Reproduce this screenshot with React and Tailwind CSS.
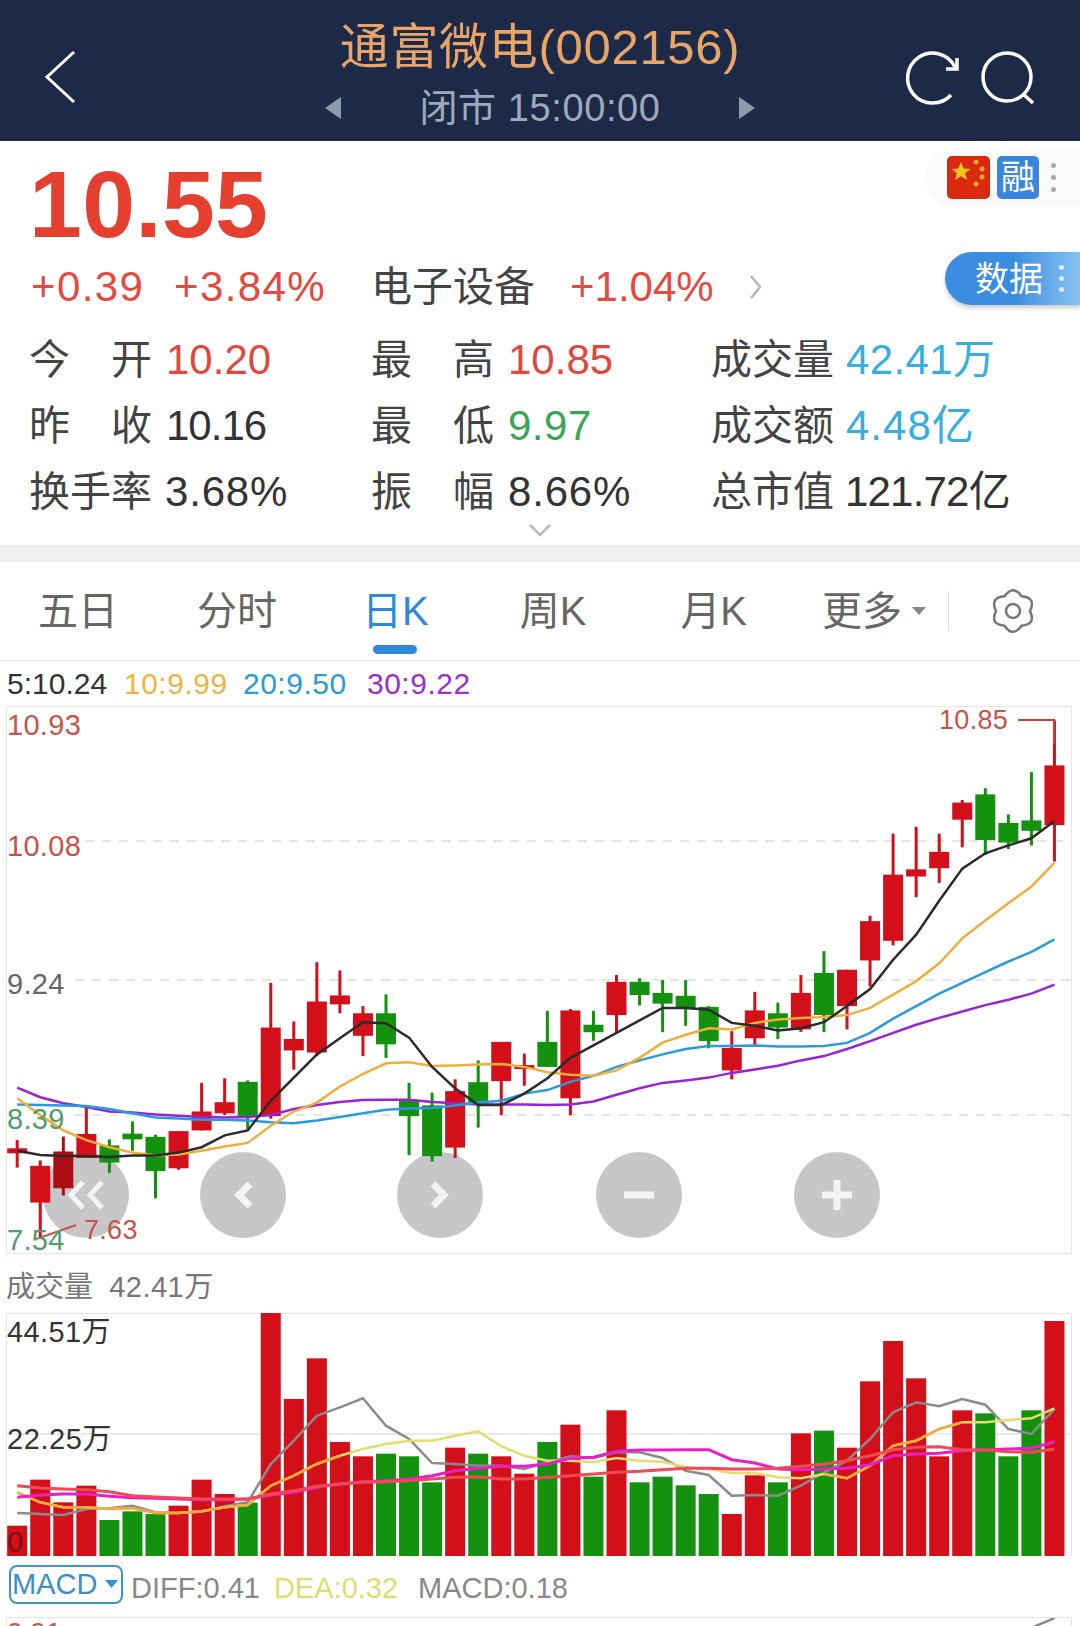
import React from 'react';

// chart traces, measured from the reference. one entry per trading day
// [wickTop, wickBottom, bodyTop, bodyBottom, up]
const candles = [
  [1235, 1312, 1258, 1272, 1], [1292, 1510, 1307, 1410, 1], [1225, 1390, 1267, 1370, 2], [1140, 1285, 1218, 1285, 1],
  [1233, 1327, 1250, 1298, 0], [1183, 1265, 1217, 1233, 0], [1220, 1398, 1226, 1322, 0], [1210, 1318, 1210, 1314, 1],
  [1075, 1208, 1155, 1208, 1], [1062, 1165, 1129, 1160, 1], [1068, 1205, 1072, 1170, 0], [795, 1175, 920, 1168, 1],
  [903, 1038, 952, 984, 1], [737, 1000, 847, 990, 1], [760, 880, 830, 855, 1], [860, 1000, 880, 943, 1],
  [827, 1005, 880, 967, 0], [1075, 1277, 1125, 1168, 0], [1102, 1295, 1138, 1280, 0], [1065, 1285, 1098, 1256, 1],
  [1012, 1200, 1073, 1135, 0], [960, 1165, 960, 1070, 1], [993, 1083, 1025, 1033, 1], [873, 1030, 960, 1030, 0],
  [868, 1165, 872, 1118, 1], [873, 957, 912, 933, 0], [773, 935, 792, 885, 1], [782, 858, 792, 829, 0],
  [787, 933, 823, 853, 0], [787, 915, 831, 868, 0], [860, 978, 862, 958, 0], [930, 1065, 977, 1040, 1],
  [820, 968, 872, 950, 1], [850, 952, 880, 920, 0], [773, 932, 823, 925, 1], [706, 933, 767, 885, 0],
  [758, 925, 758, 860, 1], [607, 805, 622, 732, 1], [377, 690, 492, 677, 1], [358, 555, 477, 497, 1],
  [377, 515, 428, 474, 1], [283, 415, 290, 338, 1], [250, 437, 267, 395, 0], [323, 420, 347, 402, 0],
  [205, 410, 340, 369, 0], [60, 455, 186, 353, 1],
];

const ma5 = [1265, 1277, 1280, 1280, 1282, 1278, 1278, 1270, 1255, 1222, 1208, 1125, 1060, 995, 950, 905, 908, 948, 1030, 1090, 1137, 1137, 1105, 1062, 1005, 970, 935, 900, 865, 865, 870, 907, 915, 928, 922, 905, 860, 812, 730, 660, 565, 475, 432, 410, 390, 342];
const ma10 = [1118, 1165, 1208, 1235, 1255, 1270, 1278, 1275, 1265, 1253, 1243, 1195, 1155, 1130, 1085, 1050, 1020, 1017, 1028, 1026, 1023, 1022, 1030, 1045, 1052, 1055, 1040, 1005, 962, 940, 922, 925, 907, 897, 893, 890, 885, 865, 828, 790, 740, 670, 620, 572, 525, 458];
const ma20 = [1135, 1137, 1138, 1140, 1148, 1160, 1172, 1175, 1178, 1178, 1180, 1185, 1188, 1180, 1170, 1160, 1150, 1147, 1145, 1138, 1130, 1125, 1105, 1095, 1072, 1055, 1030, 1012, 995, 980, 972, 972, 970, 973, 973, 972, 963, 935, 895, 860, 825, 795, 765, 735, 708, 673];
const ma30 = [1088, 1115, 1132, 1142, 1155, 1158, 1163, 1167, 1170, 1172, 1170, 1165, 1148, 1137, 1128, 1123, 1122, 1122, 1128, 1132, 1135, 1135, 1135, 1137, 1135, 1127, 1108, 1090, 1075, 1068, 1060, 1047, 1037, 1027, 1012, 1000, 980, 958, 935, 912, 893, 875, 857, 842, 825, 800];

const volTops = [800, 662, 730, 680, 783, 757, 765, 740, 662, 705, 731, 160, 420, 298, 549, 592, 584, 592, 670, 566, 584, 592, 644, 549, 497, 653, 454, 670, 653, 679, 705, 765, 649, 670, 523, 515, 566, 367, 246, 358, 592, 454, 463, 592, 454, 186];
const volGray = [762, 765, 768, 750, 748, 740, 760, 762, 758, 742, 730, 615, 545, 470, 445, 418, 500, 540, 612, 615, 620, 620, 630, 610, 592, 597, 580, 580, 597, 635, 648, 710, 708, 710, 680, 640, 605, 540, 460, 430, 442, 420, 437, 510, 525, 450];
const volYellow = [700, 730, 745, 745, 750, 748, 762, 762, 757, 745, 738, 680, 650, 615, 590, 570, 555, 545, 545, 530, 517, 562, 590, 605, 605, 610, 597, 605, 608, 625, 630, 642, 642, 655, 658, 645, 658, 620, 560, 545, 510, 490, 490, 483, 478, 448];
const volMagenta = [715, 708, 705, 705, 712, 716, 718, 720, 722, 722, 720, 708, 700, 685, 675, 668, 665, 660, 650, 635, 628, 622, 622, 615, 598, 595, 577, 573, 573, 572, 572, 602, 612, 630, 632, 630, 628, 617, 590, 585, 583, 575, 572, 570, 568, 548];
const volRed = [680, 687, 690, 692, 698, 710, 714, 717, 720, 720, 720, 705, 695, 682, 675, 670, 668, 665, 660, 655, 653, 660, 660, 655, 650, 645, 640, 637, 632, 628, 628, 630, 630, 628, 622, 615, 605, 590, 572, 565, 563, 572, 573, 578, 580, 570];

const dayX = (i) => 17.2 + 23.05 * i;
const priceY = (v) => 700 + v / 2.8;
const volY = (v) => 1260 + v / 3;
const toPoints = (arr, mapY, from = 0) => arr.map((v, i) => `${dayX(i + from).toFixed(1)},${mapY(v).toFixed(1)}`).join(' ');

const candleColor = { 0: '#13910f', 1: '#d30f1a', 2: '#b00c14' };

function gearPath(cx, cy) {
  let d = '';
  for (let k = 0; k < 6; k++) {
    const a = (-90 + k * 60) * Math.PI / 180;
    const b = (-60 + k * 60) * Math.PI / 180;
    const c = (-120 + k * 60) * Math.PI / 180;
    const start = `${(cx + 17 * Math.cos(c)).toFixed(1)} ${(cy + 17 * Math.sin(c)).toFixed(1)}`;
    if (k === 0) d += `M${start} `;
    d += `Q${(cx + 27 * Math.cos(a)).toFixed(1)} ${(cy + 27 * Math.sin(a)).toFixed(1)} ${(cx + 17 * Math.cos(b)).toFixed(1)} ${(cy + 17 * Math.sin(b)).toFixed(1)} `;
  }
  return d + 'Z';
}

function Label({ text }) {
  return <span className="w-[123px] shrink-0 flex justify-between text-[41px] leading-[48px] text-[#444]">{text.map((c) => <span key={c}>{c}</span>)}</span>;
}

function Stat({ label, value, color }) {
  return (
    <div className="flex items-center">
      <Label text={label} />
      <span className={`text-[42px] leading-[48px] ${color}`}>{value}</span>
    </div>
  );
}

function RoundButton({ className, children }) {
  return (
    <div className={`absolute top-[445px] w-[86px] h-[86px] rounded-full bg-[#c7c7c9] ${className}`}>
      <svg width="86" height="86" viewBox="0 0 86 86" fill="none" stroke="#f4f4f4">{children}</svg>
    </div>
  );
}

export default function App() {
  return (
    <div className="w-[1080px] h-[1626px] overflow-hidden bg-white flex flex-col [font-family:'Liberation_Sans','Noto_Sans_CJK_SC',sans-serif]">
      {/* header */}
      <div className="h-[141px] shrink-0 bg-[#1c2a48] flex relative">
        <svg className="w-[180px] h-[141px]" viewBox="0 0 180 141" fill="none" stroke="#fff" strokeWidth="3">
          <path d="M74 52 47 77 74 102" />
        </svg>
        <div className="flex-1 flex flex-col items-center">
          <div className="mt-[21px] text-[49px] leading-[52px] text-[#e9a468] tracking-[0.7px]">通富微电(002156)</div>
          <div className="mt-[13px] w-[431px] flex items-center justify-between">
            <svg width="16" height="24" viewBox="0 0 16 24"><path d="M16 1V23L0 12Z" fill="#8e99ac" /></svg>
            <span className="text-[38px] leading-[44px] tracking-[0.6px] text-[#a0a9b9]">闭市 15:00:00</span>
            <svg width="16" height="24" viewBox="0 0 16 24"><path d="M0 1V23L16 12Z" fill="#8e99ac" /></svg>
          </div>
        </div>
        <svg className="w-[180px] h-[141px]" viewBox="900 0 180 141" fill="none" stroke="#fff" strokeWidth="3.5">
          <path d="M951 95A25 25 0 1 1 955 67" />
          <path d="M946 69H957V58" />
          <circle cx="1007" cy="77" r="24" />
          <path d="M1023 94 1033 103" />
        </svg>
      </div>

      {/* quote */}
      <div className="h-[404px] shrink-0 relative flex flex-col">
        <div className="h-[126px] pl-[29px] flex items-center text-[95px] leading-[100px] tracking-[0.3px] font-bold text-[#e5402f]">10.55</div>
        <div className="h-[40px] pl-[31px] flex items-center text-[42px] leading-[44px] text-[#e5493f]">
          <span className="w-[143px] tracking-[1.4px]">+0.39</span>
          <span className="w-[197px] tracking-[1.4px]">+3.84%</span>
          <span className="w-[199px] text-[41px] text-[#444]">电子设备</span>
          <span className="w-[178px]">+1.04%</span>
          <svg width="16" height="28" viewBox="0 0 16 28" fill="none" stroke="#b5b5b5" strokeWidth="2.5"><path d="M3 3 12 14 3 25" /></svg>
        </div>
        <div className="mt-[20px] pl-[29px] grid grid-cols-[342px_340px_1fr] auto-rows-[66px] items-center">
          <Stat label={['今', '开']} value="10.20" color="ml-[14px] text-[#e0483e]" />
          <Stat label={['最', '高']} value="10.85" color="ml-[14px] text-[#e0483e]" />
          <Stat label={['成', '交', '量']} value="42.41万" color="ml-[12px] tracking-[0.4px] text-[#35aee2]" />
          <Stat label={['昨', '收']} value="10.16" color="ml-[14px] tracking-[-1px] text-[#333]" />
          <Stat label={['最', '低']} value="9.97" color="ml-[14px] tracking-[0.5px] text-[#3aa655]" />
          <Stat label={['成', '交', '额']} value="4.48亿" color="ml-[12px] tracking-[1px] text-[#35aee2]" />
          <Stat label={['换', '手', '率']} value="3.68%" color="ml-[13px] tracking-[0.8px] text-[#333]" />
          <Stat label={['振', '幅']} value="8.66%" color="ml-[14px] tracking-[0.8px] text-[#333]" />
          <Stat label={['总', '市', '值']} value="121.72亿" color="ml-[11px] tracking-[-0.8px] text-[#333]" />
        </div>
        <svg className="self-center mt-[-2px]" width="24" height="14" viewBox="0 0 24 14" fill="none" stroke="#bbb" strokeWidth="2.5"><path d="M2 2 12 12 22 2" /></svg>

        {/* badges on the right */}
        <div className="absolute right-0 top-[9px] w-[155px] h-[55px] rounded-l-full bg-[#fafafa] flex items-center pl-[22px]">
          <svg width="43" height="43" viewBox="0 0 43 43">
            <rect width="43" height="43" rx="5" fill="#d9290f" />
            <path d="M14 6l2.6 6.4 6.9.5-5.3 4.4 1.8 6.7-6-3.7-6 3.7 1.8-6.7-5.300-4.400 6.900-.5z" fill="#f7c51d" />
            <circle cx="29" cy="6" r="2.5" fill="#e9a825" />
            <circle cx="35" cy="13" r="2.5" fill="#e9a825" />
            <circle cx="35" cy="21" r="2.5" fill="#e9a825" />
            <circle cx="29" cy="28" r="2.5" fill="#e9a825" />
          </svg>
          <div className="ml-[7px] w-[42px] h-[43px] rounded-[5px] bg-[#3a86dc] flex items-center justify-center text-[34px] leading-[43px] text-white">融</div>
          <div className="ml-[12px] flex flex-col gap-[7px]">
            <span className="w-[5px] h-[5px] rounded-full bg-[#aaa]" />
            <span className="w-[5px] h-[5px] rounded-full bg-[#aaa]" />
            <span className="w-[5px] h-[5px] rounded-full bg-[#aaa]" />
          </div>
        </div>
        <div className="absolute right-0 top-[111px] w-[135px] h-[53px] rounded-l-full bg-gradient-to-r from-[#3a8de0] via-[#3a8de0] to-[#86c2f2] shadow-[0_3px_4px_rgba(0,0,0,0.2)] flex items-center pl-[30px]">
          <span className="text-[34px] leading-[40px] text-white">数据</span>
          <div className="ml-[16px] flex flex-col gap-[6px]">
            <span className="w-[5px] h-[5px] rounded-full bg-[#dfeefb]" />
            <span className="w-[5px] h-[5px] rounded-full bg-[#dfeefb]" />
            <span className="w-[5px] h-[5px] rounded-full bg-[#dfeefb]" />
          </div>
        </div>
      </div>

      <div className="h-[17px] shrink-0 bg-[#f0f0f0]" />

      {/* period tabs */}
      <div className="h-[99px] shrink-0 relative flex items-center border-b border-[#e5e5e5] text-[40px] leading-[46px] text-[#666]">
        <span className="ml-[38px]">五日</span>
        <span className="ml-[79px]">分时</span>
        <span className="ml-[85px] text-[#2f89d9]">日K</span>
        <span className="ml-[91px]">周K</span>
        <span className="ml-[94px]">月K</span>
        <span className="ml-[75px]">更多</span>
        <svg className="ml-[10px]" width="14" height="8" viewBox="0 0 14 8"><path d="M0 0H14L7 8Z" fill="#888" /></svg>
        <span className="ml-[22px] w-[1px] h-[40px] bg-[#ddd]" />
        <svg className="ml-[41px]" width="46" height="46" viewBox="992 588 46 46" fill="none" stroke="#777" strokeWidth="2.5">
          <path d={gearPath(1015, 611)} />
          <circle cx="1015" cy="611" r="7" />
        </svg>
        <span className="absolute left-[373px] top-[83px] w-[44px] h-[9px] rounded-full bg-[#2f89d9]" />
      </div>

      {/* MA legend */}
      <div className="h-[45px] shrink-0 pl-[7px] flex items-center text-[30px] leading-[36px]">
        <span className="w-[117px] text-[#333]">5:10.24</span>
        <span className="w-[119px] tracking-[0.5px] text-[#eeb440]">10:9.99</span>
        <span className="w-[124px] tracking-[0.5px] text-[#2a9ad8]">20:9.50</span>
        <span className="tracking-[0.5px] text-[#9a30c8]">30:9.22</span>
      </div>

      {/* price panel */}
      <div className="h-[548px] shrink-0 ml-[6px] w-[1066px] relative border border-[#e5e5e5] text-[29px] leading-[36px] tracking-[0.3px]">
        <RoundButton className="left-[36px]"><path d="M40 30 28 43 40 56M59 30 47 43 59 56" strokeWidth="5" /></RoundButton>
        <RoundButton className="left-[193px]"><path d="M50 32 39 43 50 54" strokeWidth="7" /></RoundButton>
        <RoundButton className="left-[390px]"><path d="M36 32 47 43 36 54" strokeWidth="7" /></RoundButton>
        <RoundButton className="left-[589px]"><path d="M28 43H58" strokeWidth="7" /></RoundButton>
        <RoundButton className="left-[787px]"><path d="M28 43H58M43 28V58" strokeWidth="7" /></RoundButton>

        <svg className="absolute -left-px -top-px" width="1066" height="548" viewBox="6 707 1066 548" fill="none">
          <path d="M85 842H1070" stroke="#ddd" strokeWidth="1.5" strokeDasharray="9 8" />
          <path d="M75 981H1070" stroke="#ddd" strokeWidth="1.5" strokeDasharray="9 8" />
          <path d="M75 1116H1070" stroke="#ddd" strokeWidth="1.5" strokeDasharray="9 8" />
          {candles.map(([wt, wb, bt, bb, up], i) => (
            <g key={i} fill={candleColor[up]}>
              <rect x={dayX(i) - 1.5} y={priceY(wt)} width="3" height={priceY(wb) - priceY(wt)} />
              <rect x={dayX(i) - 10} y={priceY(bt)} width="20" height={Math.max(priceY(bb) - priceY(bt), 4)} />
            </g>
          ))}
          <polyline points={toPoints(ma30, priceY)} stroke="#9a22d6" strokeWidth="2.5" />
          <polyline points={toPoints(ma20, priceY)} stroke="#2a9ae0" strokeWidth="2.5" />
          <polyline points={toPoints(ma10, priceY)} stroke="#f0ae3a" strokeWidth="2.5" />
          <polyline points={toPoints(ma5, priceY)} stroke="#2b2b2b" strokeWidth="2.5" />
          <path d="M42 1238 76 1226" stroke="#c9524a" strokeWidth="2" />
          <path d="M1018 721H1054V745" stroke="#c9423a" strokeWidth="2" />
        </svg>

        <span className="absolute left-[0px] top-[0px] text-[#c9524a]">10.93</span>
        <span className="absolute left-[0px] top-[121px] text-[#c9524a]">10.08</span>
        <span className="absolute left-[0px] top-[259px] text-[#666]">9.24</span>
        <span className="absolute left-[0px] top-[394px] text-[#4f9e6d]">8.39</span>
        <span className="absolute left-[0px] top-[515px] text-[#4f9e6d]">7.54</span>
        <span className="absolute left-[77px] top-[505px] text-[27px] text-[#c9524a]">7.63</span>
        <span className="absolute left-[932px] top-[-5px] text-[27px] text-[#c9524a]">10.85</span>
      </div>

      {/* volume */}
      <div className="h-[59px] shrink-0 pl-[6px] pt-[15px] text-[29px] leading-[36px] text-[#777]">成交量&nbsp;&nbsp;<span className="tracking-[0.5px]">42.41万</span></div>
      <div className="h-[243px] shrink-0 ml-[6px] w-[1066px] relative border-x border-t border-[#e5e5e5] text-[29px] leading-[36px] text-[#333]">
        <svg className="absolute -left-px -top-px" width="1066" height="243" viewBox="6 1314 1066 243" fill="none">
          <path d="M6 1435H1070" stroke="#e5e5e5" strokeWidth="1.5" />
          {volTops.map((top, i) => (
            <rect key={i} x={dayX(i) - 10} y={volY(top)} width="20" height={1557 - volY(top)} fill={candles[i][4] === 0 ? '#13910f' : '#d30f1a'} />
          ))}
          <polyline points={toPoints(volGray, volY)} stroke="#8b8b8b" strokeWidth="2.5" />
          <polyline points={toPoints(volYellow, volY)} stroke="#e3de6c" strokeWidth="2.5" />
          <polyline points={toPoints(volYellow.slice(0, 15), volY)} stroke="#f7a93a" strokeWidth="2.5" />
          <polyline points={toPoints(volYellow.slice(35, 42), volY, 35)} stroke="#f7a93a" strokeWidth="2.5" />
          <polyline points={toPoints(volMagenta, volY)} stroke="#ea1fc8" strokeWidth="3" />
          <polyline points={toPoints(volRed, volY)} stroke="#ef4a55" strokeWidth="3" />
        </svg>
        <span className="absolute left-[0px] top-[0px] tracking-[0.4px]">44.51万</span>
        <span className="absolute left-[0px] top-[107px] tracking-[0.6px]">22.25万</span>
        <span className="absolute left-[0px] top-[210px] text-[#7d1016]">0</span>
      </div>

      {/* MACD row */}
      <div className="h-[61px] shrink-0 flex items-center pl-[9px] text-[29px] leading-[36px]">
        <div className="w-[114px] h-[39px] -mt-[5px] rounded-[8px] border-2 border-[#3f93c8] flex items-center pl-[1px] text-[29px] text-[#3c8fc8]">
          MACD
          <svg className="ml-[8px] shrink-0" width="13" height="8" viewBox="0 0 13 8"><path d="M0 0H13L6.500 8Z" fill="#2c96dc" /></svg>
        </div>
        <span className="ml-[8px] w-[143px] mt-[3px] text-[#888]">DIFF:0.41</span>
        <span className="w-[144px] mt-[3px] text-[#dfdc70]">DEA:0.32</span>
        <span className="mt-[3px] text-[#888]">MACD:0.18</span>
      </div>

      {/* bottom of the MACD panel, cut by the screen */}
      <div className="flex-1 ml-[6px] w-[1066px] relative overflow-hidden border-x border-t border-[#e5e5e5] text-[28px] leading-[36px] text-[#c9524a]">
        <span className="absolute left-[0px] top-[-3px]">0.91</span>
        <svg className="absolute right-[16px] top-[-1px]" width="22" height="10" viewBox="0 0 22 10" fill="none" stroke="#888" strokeWidth="2.5"><path d="M0 10 22 1" /></svg>
      </div>
    </div>
  );
}
